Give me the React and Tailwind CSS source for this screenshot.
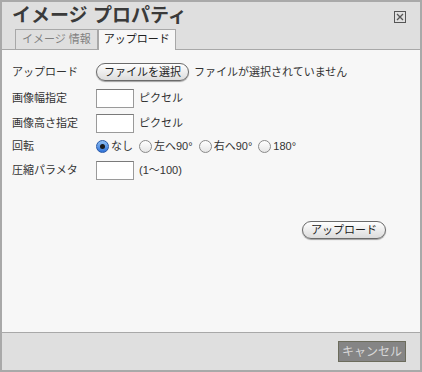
import React from 'react';

const font = { fontFamily: '"Liberation Sans", "Noto Sans CJK JP", sans-serif' };

const Radio = ({ checked, label }) => (
  <label className="flex items-center gap-[2px] mr-[6px] whitespace-nowrap">
    {checked ? (
      <span className="w-[13px] h-[13px] rounded-full border border-[#2a5aa8] bg-gradient-to-b from-[#8fc0f5] to-[#2f72d8] flex items-center justify-center">
        <span className="w-[5px] h-[5px] rounded-full bg-[#1a1a1a]"></span>
      </span>
    ) : (
      <span className="w-[13px] h-[13px] rounded-full border border-[#8a8a8a] bg-gradient-to-b from-[#ffffff] to-[#e6e6e6]"></span>
    )}
    <span>{label}</span>
  </label>
);

const PillButton = ({ children, className = '' }) => (
  <button
    className={`h-[18px] rounded-full border border-[#6a6a6a] bg-gradient-to-b from-[#ffffff] to-[#dcdcdc] text-[11px] text-[#222] leading-none whitespace-nowrap shadow-[0_1px_1px_rgba(0,0,0,0.35)] ${className}`}
    style={font}
  >
    {children}
  </button>
);

const TextBox = () => (
  <span className="block w-[38px] h-[19px] bg-white border border-[#9a9a9a] border-t-[#7a7a7a]"></span>
);

const Row = ({ label, h, children }) => (
  <div className={`flex items-center ${h}`}>
    <div className="w-[84px] shrink-0">{label}</div>
    <div className="flex items-center whitespace-nowrap">{children}</div>
  </div>
);

export default function App() {
  return (
    <div
      className="w-[422px] h-[372px] border-2 border-[#a9a9a9] bg-[#dfdfdf] flex flex-col text-[#333]"
      style={font}
    >
      {/* header */}
      <div className="h-[48px] shrink-0 flex flex-col border-b border-[#a8a8a8] relative">
        <div className="flex items-start justify-between pl-[10px] pr-[14px] pt-[3px] h-[28px]">
          <h1 className="text-[19px] font-bold leading-[22px] text-[#3a3a3a]">イメージ プロパティ</h1>
          <svg width="12" height="12" viewBox="0 0 12 12" className="mt-[6px]">
            <rect x="0.5" y="0.5" width="11" height="11" fill="none" stroke="#555" strokeWidth="1" />
            <path d="M3 3 L9 9 M9 3 L3 9" stroke="#555" strokeWidth="1.3" />
          </svg>
        </div>
        <div className="flex pl-[13px] items-end h-[20px]">
          <div className="h-[20px] px-[6px] border border-b-0 border-[#a8a8a8] text-[11px] leading-[19px] text-[#808080] bg-[#dfdfdf] whitespace-nowrap">
            イメージ 情報
          </div>
          <div className="h-[21px] -mb-px px-[5px] border border-b-0 border-[#a8a8a8] text-[11px] leading-[19px] text-[#222] bg-[#f7f7f7] relative z-10 whitespace-nowrap">
            アップロード
          </div>
        </div>
      </div>

      {/* content */}
      <div className="flex-1 bg-[#f7f7f7] pl-[10px] pt-[9px] text-[11px] text-[#333]">
        <Row label="アップロード" h="h-[26px]">
          <PillButton className="px-[7px]">ファイルを選択</PillButton>
          <span className="ml-[5px]">ファイルが選択されていません</span>
        </Row>
        <Row label="画像幅指定" h="h-[26px]">
          <TextBox />
          <span className="ml-[5px]">ピクセル</span>
        </Row>
        <Row label="画像高さ指定" h="h-[24px]">
          <TextBox />
          <span className="ml-[5px]">ピクセル</span>
        </Row>
        <Row label="回転" h="h-[22px]">
          <Radio checked label="なし" />
          <Radio label="左へ90°" />
          <Radio label="右へ90°" />
          <Radio label="180°" />
        </Row>
        <Row label="圧縮パラメタ" h="h-[26px]">
          <TextBox />
          <span className="ml-[5px]">(1〜100)</span>
        </Row>
        <div className="flex justify-end pr-[34px] mt-[38px]">
          <PillButton className="w-[84px]">アップロード</PillButton>
        </div>
      </div>

      {/* footer */}
      <div className="h-[38px] shrink-0 border-t border-[#a8a8a8] flex items-center justify-end pr-[14px]">
        <button className="w-[68px] h-[21px] border border-[#6c6c5c] bg-[#858585] text-[12px] text-[#d8d8d8] leading-none" style={font}>
          キャンセル
        </button>
      </div>
    </div>
  );
}
